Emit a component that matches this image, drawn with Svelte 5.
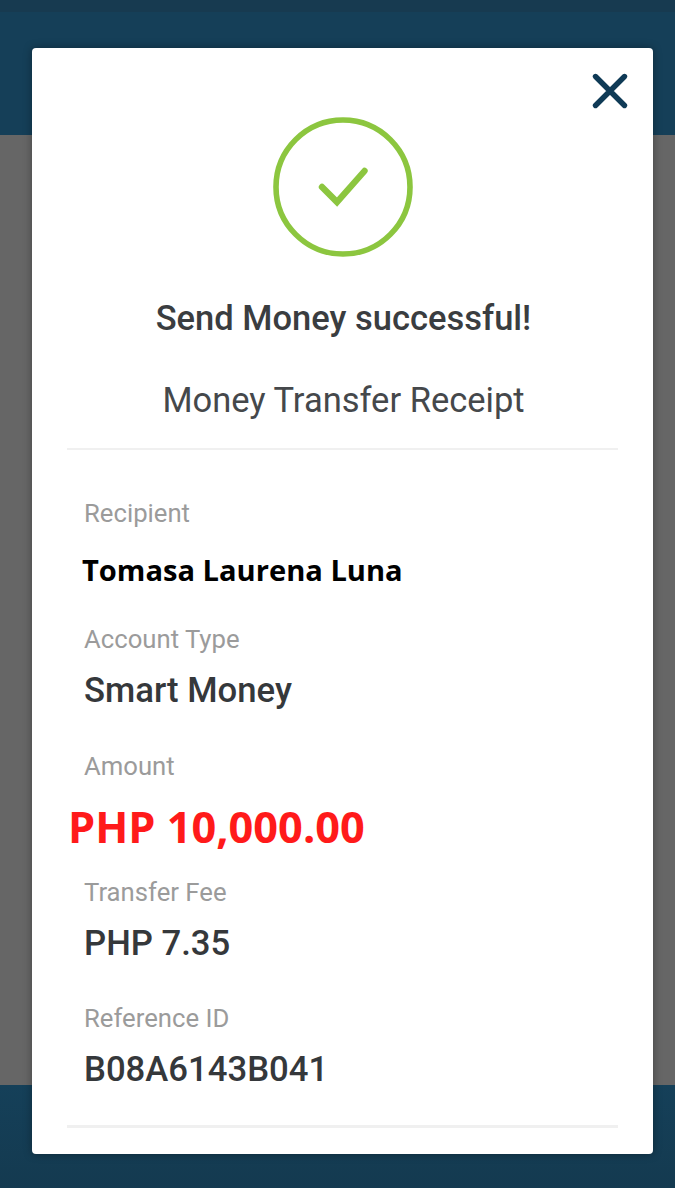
<script>
  const rows = [
    { label: 'Recipient', value: 'Tomasa Laurena Luna', kind: 'name' },
    { label: 'Account Type', value: 'Smart Money', kind: 'plain' },
    { label: 'Amount', value: 'PHP 10,000.00', kind: 'amount' },
    { label: 'Transfer Fee', value: 'PHP 7.35', kind: 'plain' },
    { label: 'Reference ID', value: 'B08A6143B041', kind: 'plain' }
  ];
</script>

<div class="page">
  <div class="backdrop">
    <div class="top-strip"></div>
    <div class="header"></div>
    <div class="dim"></div>
    <div class="footer"></div>
  </div>

  <div class="modal">
    <button class="close" aria-label="Close">
      <svg width="38" height="38" viewBox="0 0 38 38" fill="none" stroke="#0f3a56" stroke-width="5.4" stroke-linecap="round">
        <path d="M4.5 4.5 L33.5 33.5 M33.5 4.5 L4.5 33.5" />
      </svg>
    </button>

    <div class="success">
      <svg width="140" height="140" viewBox="0 0 140 140" fill="none" stroke="#8cc63f">
        <circle cx="70" cy="70" r="67" stroke-width="5.6" />
        <path d="M49 70 L64 85 L91.5 54" stroke-width="6.4" stroke-linecap="round" stroke-linejoin="miter" />
      </svg>
    </div>

    <h1>Send Money successful!</h1>
    <h2>Money Transfer Receipt</h2>
    <hr class="rule-top" />

    <dl>
      {#each rows as row}
        <div class="row {row.kind}">
          <dt>{row.label}</dt>
          <dd>{row.value}</dd>
        </div>
      {/each}
    </dl>

    <hr class="rule-bottom" />
  </div>
</div>

<style>
  :global(body) {
    margin: 0;
    background: #fff;
  }
  .page {
    position: relative;
    width: 675px;
    height: 1200px;
    overflow: hidden;
    font-family: Roboto, "Liberation Sans", sans-serif;
  }
  .backdrop {
    display: flex;
    flex-direction: column;
    height: 1188px;
  }
  .top-strip {
    height: 12px;
    background: #173a50;
  }
  .header {
    height: 123px;
    background: #153f58;
  }
  .dim {
    flex: 1;
    background: #666;
  }
  .footer {
    height: 103px;
    background: linear-gradient(#154059, #143a50);
  }
  .modal {
    position: absolute;
    left: 32px;
    top: 48px;
    width: 621px;
    height: 1106px;
    box-sizing: border-box;
    background: #fff;
    border-radius: 4px;
    box-shadow: 0 0 8px rgba(0, 0, 0, 0.35);
    padding: 69px 35px 0;
  }
  .close {
    position: absolute;
    top: 24px;
    right: 24px;
    width: 38px;
    height: 38px;
    padding: 0;
    border: 0;
    background: none;
  }
  .close svg, .success svg {
    display: block;
  }
  .success {
    display: flex;
    justify-content: center;
  }
  h1 {
    margin: 40px 0 0 2px;
    font-size: 34.5px;
    line-height: 42px;
    font-weight: 500;
    color: #3a3d40;
    text-align: center;
    white-space: nowrap;
  }
  h2 {
    margin: 40px 0 0 2px;
    font-size: 34.5px;
    line-height: 42px;
    font-weight: 400;
    color: #45484b;
    text-align: center;
    white-space: nowrap;
  }
  hr {
    margin: 0;
    border: 0;
    height: 2px;
    background: #f0f0f0;
  }
  .rule-top {
    margin-top: 27px;
  }
  dl {
    margin: 47px 0 0;
    padding-left: 17px;
  }
  .row {
    height: 126.3px;
  }
  .row:last-child {
    height: 123px;
  }
  dt {
    font-size: 25.7px;
    line-height: 32px;
    color: #9b9b9b;
  }
  dd {
    margin: 0;
    margin-top: 14px;
    font-size: 34.7px;
    line-height: 42px;
    font-weight: 500;
    color: #35383b;
  }
  .name dd {
    margin-top: 22px;
    margin-left: -2px;
    font-family: "Open Sans", sans-serif;
    font-size: 29.1px;
    line-height: 38px;
    font-weight: 700;
    color: #000;
  }
  .amount dd {
    margin-top: 22px;
    margin-left: -16px;
    font-family: "Open Sans", sans-serif;
    font-size: 43.3px;
    line-height: 46px;
    font-weight: 700;
    color: #ff1a1a;
  }
  .rule-bottom {
    height: 3px;
  }
</style>
